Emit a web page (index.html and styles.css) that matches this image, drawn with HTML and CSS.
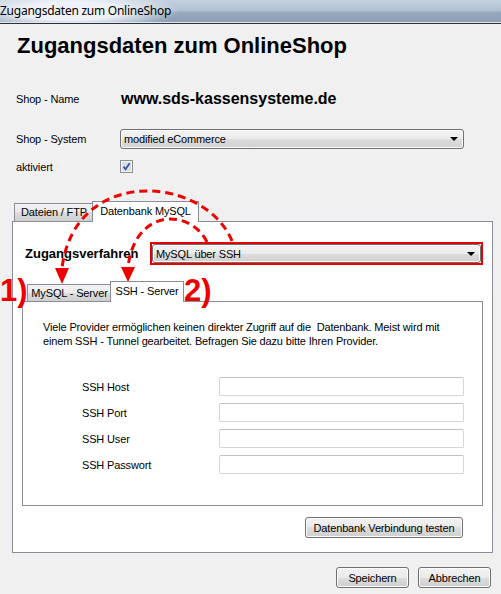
FILE: index.html
```html
<!DOCTYPE html>
<html>

<head>
    <title>Zugangsdaten zum OnlineShop</title>

    <link rel="stylesheet" href="styles.css">
</head>

<body>

    <div class="window">
        <div class="titlebar">Zugangsdaten zum OnlineShop</div>

        <h1>Zugangsdaten zum OnlineShop</h1>

        <div class="row row-name">
            <label>Shop - Name</label>
            <span class="shop-name">www.sds-kassensysteme.de</span>
        </div>
        <div class="row row-system">
            <label>Shop - System</label>
            <div class="combo combo-system"><span>modified eCommerce</span><span class="arrow"></span></div>
        </div>
        <div class="row row-active">
            <label>aktiviert</label>
            <svg class="checkbox" width="13" height="13" viewBox="0 0 13 13">
                <rect x="0.5" y="0.5" width="12" height="12" fill="#dde1e7" stroke="#8e8f8f"/>
                <rect x="1.5" y="1.5" width="10" height="10" fill="none" stroke="#f3f3f3"/>
                <path d="M3.6 6.6 L5.6 9.2 L9.6 3.2" fill="none" stroke="#2f55a4" stroke-width="1.8"/>
            </svg>
        </div>

        <!-- outer tab control -->
        <div class="tabs outer-tabs">
            <div class="tabstrip">
                <div class="tab tab-ftp">Dateien / FTP</div>
                <div class="tab active tab-mysql">Datenbank MySQL</div>
            </div>
            <div class="tabpanel outer-panel">
                <div class="access-row">
                    <b class="access-label">Zugangsverfahren</b>
                    <div class="highlight">
                        <div class="combo"><span>MySQL über SSH</span><span class="arrow"></span></div>
                    </div>
                </div>

                <!-- inner tab control -->
                <div class="tabs inner-tabs">
                    <div class="tabstrip">
                        <div class="tab tab-server">MySQL - Server</div>
                        <div class="tab active tab-ssh">SSH - Server</div>
                    </div>
                    <div class="tabpanel inner-panel">
                        <p class="info">Viele Provider ermöglichen keinen direkter Zugriff auf die&nbsp; Datenbank. Meist wird mit<br>einem SSH - Tunnel gearbeitet. Befragen Sie dazu bitte Ihren Provider.</p>
                        <div class="ssh-fields">
                            <label>SSH Host</label><input type="text">
                            <label>SSH Port</label><input type="text">
                            <label>SSH User</label><input type="text">
                            <label>SSH Passwort</label><input type="text">
                        </div>
                    </div>
                </div>

                <div class="test-row">
                    <button class="btn btn-test">Datenbank Verbindung testen</button>
                </div>
            </div>
        </div>

        <div class="footer-buttons">
            <button class="btn">Speichern</button>
            <button class="btn">Abbrechen</button>
        </div>

        <!-- red annotations drawn over the dialog -->
        <svg class="arrows" width="501" height="594" viewBox="0 0 501 594">
            <path d="M232 241 C205 175, 75 165, 62 268" fill="none" stroke="#ee0000" stroke-width="3" stroke-dasharray="8 5"/>
            <path d="M207 242 C190 208, 135 208, 128 267" fill="none" stroke="#ee0000" stroke-width="3" stroke-dasharray="8 5"/>
            <polygon points="55,268 69,268 62,284" fill="#ee0000"/>
            <polygon points="121,267 135,267 128,282" fill="#ee0000"/>
        </svg>
        <span class="marker marker-1">1)</span>
        <span class="marker marker-2">2)</span>
    </div>

</body>

</html>
```

FILE: styles.css
```css
body {
    margin: 0;
    background: #f0f0f0;
    font-family: "Liberation Sans", Arial, sans-serif;
    font-size: 11px;
    letter-spacing: -0.15px;
    color: #000;
}

.window {
    position: relative;
    width: 501px;
    height: 594px;
    overflow: hidden;
}

/**
 * Aero style title bar
 */
.titlebar {
    height: 23px;
    line-height: 22px;
    font-family: "Noto Sans", sans-serif;
    font-size: 12px;
    letter-spacing: -0.25px;
    background:
        radial-gradient(ellipse 110px 20px at 70px 11px, rgba(238, 242, 247, 1) 45%, rgba(238, 242, 247, 0) 100%),
        linear-gradient(to bottom, #c3d1df 0%, #b2c2d3 45%, #95a8bd 55%, #8b9eb3 100%);
    border-bottom: 1px solid #2c3139;
    box-shadow: inset 0 -1px 0 #dfe6ee;
}

h1 {
    margin: 9px 0 0 17px;
    font-size: 22px;
    line-height: 26px;
    font-weight: bold;
    letter-spacing: 0;
}

/**
 * Top form rows
 */
.row {
    display: flex;
    align-items: center;
    padding-left: 16px;
}

.row label {
    width: 104px;
    flex: none;
}

.row-name {
    height: 20px;
    margin-top: 30px;
}

.row-system {
    height: 20px;
    margin-top: 20px;
}

.row-active {
    height: 13px;
    margin-top: 11px;
}

.shop-name {
    margin-left: 1px;
    font-size: 16px;
    font-weight: bold;
    letter-spacing: 0;
}

.combo {
    display: flex;
    align-items: center;
    justify-content: space-between;
    box-sizing: border-box;
    height: 20px;
    padding: 0 5px 0 3px;
    border: 1px solid #707070;
    border-radius: 3px;
    background: linear-gradient(to bottom, #f3f3f3 0%, #ebebeb 50%, #dddddd 50%, #d0d0d0 100%);
    box-shadow: inset 0 0 0 1px #fbfbfb;
}

.combo-system {
    width: 344px;
}

.arrow {
    width: 0;
    height: 0;
    border-left: 4px solid transparent;
    border-right: 4px solid transparent;
    border-top: 4px solid #000;
}

/**
 * Tab controls
 */
.outer-tabs {
    margin: 28px 8px 0 12px;
}

.tabstrip {
    display: flex;
    align-items: flex-end;
    height: 20px;
    padding-left: 2px;
}

.tab {
    box-sizing: border-box;
    height: 18px;
    line-height: 17px;
    text-align: center;
    border: 1px solid #898c95;
    border-bottom: none;
    background: linear-gradient(to bottom, #f2f2f2 0%, #ebebeb 50%, #dddddd 50%, #cfcfcf 100%);
}

.tab.active {
    position: relative;
    z-index: 1;
    height: 21px;
    line-height: 19px;
    margin-bottom: -1px;
    margin-left: -2px;
    background: #fff;
}

.tab-ftp {
    width: 80px;
}

.tab-mysql {
    width: 107px;
}

.tabpanel {
    border: 1px solid #898c95;
    background: #fff;
}

.outer-panel {
    padding: 20px 0 14px;
}

.access-row {
    display: flex;
    align-items: center;
    height: 23px;
    margin: 0 9px 0 12px;
}

.access-label {
    width: 125px;
    flex: none;
    font-size: 13px;
    letter-spacing: 0;
}

.highlight {
    flex: 1;
    border: 2px solid #e80000;
}

.highlight .combo {
    height: 19px;
}

.inner-tabs {
    margin: 16px 9px 0 9px;
}

.inner-tabs .tabstrip {
    padding-left: 5px;
}

.inner-tabs .tab {
    height: 17px;
    line-height: 16px;
}

.inner-tabs .tab.active {
    height: 21px;
    line-height: 19px;
}

.tab-server {
    width: 85px;
}

.tab-ssh {
    width: 74px;
}

.inner-panel {
    padding: 18px 20px 31px;
}

.info {
    margin: 0;
    line-height: 14px;
    white-space: nowrap;
}

.ssh-fields {
    display: grid;
    grid-template-columns: 137px 245px;
    grid-auto-rows: 19px;
    row-gap: 7px;
    align-items: center;
    margin: 29px 0 0 39px;
}

.ssh-fields input {
    box-sizing: border-box;
    height: 19px;
    margin: 0;
    border: 1px solid #d5d6d8;
    border-top-color: #bfc1c5;
    border-radius: 2px;
    background: #fff;
}

.test-row {
    display: flex;
    justify-content: flex-end;
    margin-top: 11px;
    padding-right: 29px;
}

/**
 * Buttons
 */
.btn {
    box-sizing: border-box;
    height: 21px;
    width: 73px;
    padding: 0;
    font-family: "Liberation Sans", Arial, sans-serif;
    font-size: 11px;
    letter-spacing: -0.15px;
    color: #000;
    border: 1px solid #707070;
    border-radius: 3px;
    background: linear-gradient(to bottom, #f2f2f2 0%, #ebebeb 50%, #dddddd 50%, #cfcfcf 100%);
    box-shadow: inset 0 0 0 1px #fbfbfb;
}

.btn-test {
    width: 158px;
}

.footer-buttons {
    display: flex;
    justify-content: flex-end;
    gap: 9px;
    margin-top: 14px;
    padding-right: 10px;
}

/**
 * Red annotations
 */
.arrows {
    position: absolute;
    left: 0;
    top: 0;
    pointer-events: none;
    z-index: 5;
}

.marker {
    position: absolute;
    z-index: 6;
    top: 275px;
    font-size: 31px;
    line-height: 31px;
    font-weight: bold;
    letter-spacing: 0;
    color: #ee0000;
}

.marker-1 {
    left: 0;
}

.marker-2 {
    left: 184px;
}
```
